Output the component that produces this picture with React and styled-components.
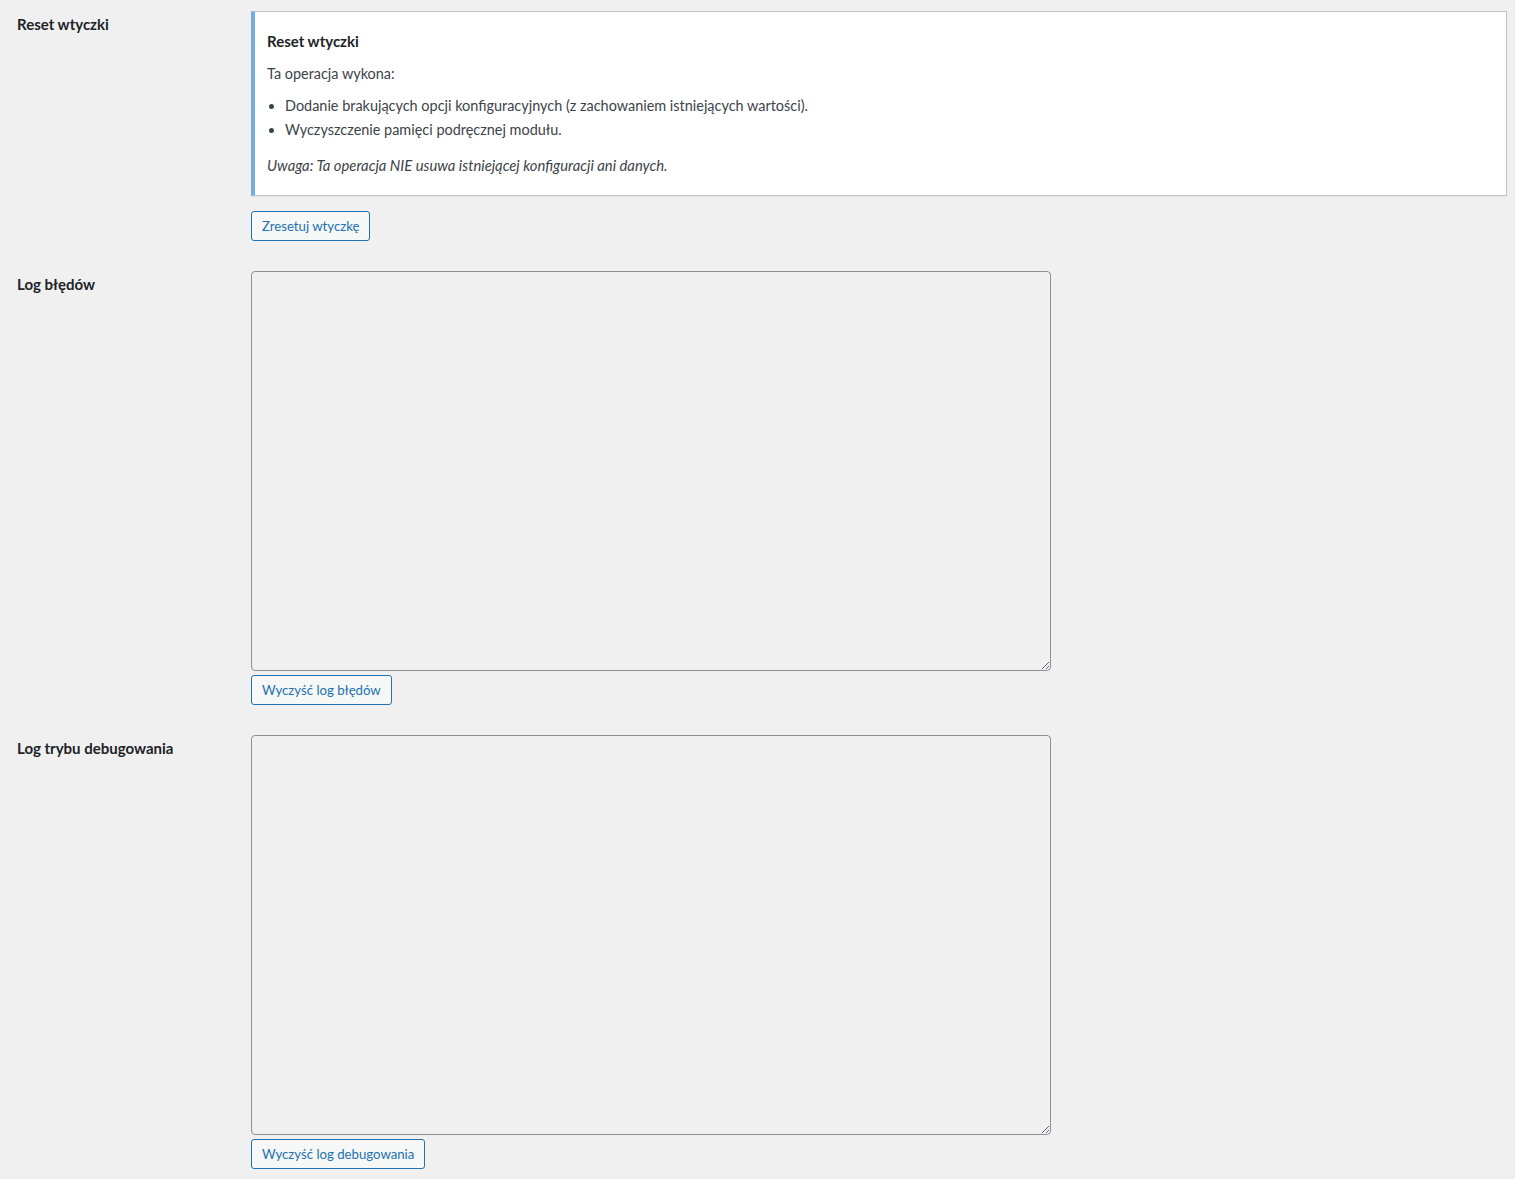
import styled, { createGlobalStyle } from "styled-components";

const GlobalStyle = createGlobalStyle`
  html, body {
    margin: 0;
    padding: 0;
    background: #f0f0f0;
  }
  body {
    font-family: Lato, "Liberation Sans", Arial, sans-serif;
    color: #3c434a;
    font-size: 14px;
  }
`;

const Form = styled.div`
  display: grid;
  grid-template-columns: 234px 1fr;
  row-gap: 30px;
  padding: 11px 8px 10px 17px;
`;

const Label = styled.div`
  padding-top: 4px;
  font-size: 15px;
  line-height: 18px;
  font-weight: 700;
  color: #1d2327;
`;

const Field = styled.div`
  display: flex;
  flex-direction: column;
  align-items: flex-start;
`;

const Notice = styled.div`
  align-self: stretch;
  background: #fff;
  border: 1px solid #c3c4c7;
  border-left: 4px solid #72aee6;
  box-shadow: 0 1px 1px rgba(0, 0, 0, 0.04);
  padding: 19px 12px 20px 12px;
  font-size: 14.45px;
  line-height: 20px;
  color: #3c434a;
`;

const NoticeTitle = styled.div`
  font-size: 15px;
  font-weight: 700;
  color: #1d2327;
`;

const Para = styled.p`
  margin: ${(p) => (p.$italic ? 15 : 13)}px 0 0;
  font-style: ${(p) => (p.$italic ? "italic" : "normal")};
  font-size: ${(p) => (p.$italic ? "14.8px" : "inherit")};
`;

const List = styled.ul`
  margin: 12px 0 0;
  padding-left: 18px;
  list-style: disc outside;
`;

const Item = styled.li`
  & + & {
    margin-top: 4px;
  }
`;

const Button = styled.button`
  margin-top: ${(p) => p.$gap || 4}px;
  height: 30px;
  padding: 0 10px;
  border: 1px solid #2271b1;
  border-radius: 3px;
  background: #f6f7f7;
  color: #2271b1;
  font-family: Lato, "Liberation Sans", Arial, sans-serif;
  font-size: 13.2px;
  line-height: 28px;
  cursor: pointer;
`;

const LogArea = styled.textarea`
  display: block;
  box-sizing: border-box;
  width: 800px;
  height: 400px;
  margin: 0;
  border: 1px solid #8c8f94;
  border-radius: 4px;
  background: transparent;
  font-family: "Liberation Mono", monospace;
  font-size: 13px;
  color: #2c3338;
  padding: 2px 6px;
`;

const logs = [
  { label: "Log błędów", button: "Wyczyść log błędów" },
  { label: "Log trybu debugowania", button: "Wyczyść log debugowania" },
];

export default function App() {
  return (
    <>
      <GlobalStyle />
      <Form>
        <Label>Reset wtyczki</Label>
        <Field>
          <Notice>
            <NoticeTitle>Reset wtyczki</NoticeTitle>
            <Para>Ta operacja wykona:</Para>
            <List>
              <Item>Dodanie brakujących opcji konfiguracyjnych (z zachowaniem istniejących wartości).</Item>
              <Item>Wyczyszczenie pamięci podręcznej modułu.</Item>
            </List>
            <Para $italic>
              Uwaga: Ta operacja NIE usuwa istniejącej konfiguracji ani danych.
            </Para>
          </Notice>
          <Button $gap={15}>Zresetuj wtyczkę</Button>
        </Field>

        {logs.map((log) => [
          <Label key={log.label + "-l"}>{log.label}</Label>,
          <Field key={log.label + "-f"}>
            <LogArea readOnly defaultValue="" />
            <Button>{log.button}</Button>
          </Field>,
        ])}
      </Form>
    </>
  );
}
